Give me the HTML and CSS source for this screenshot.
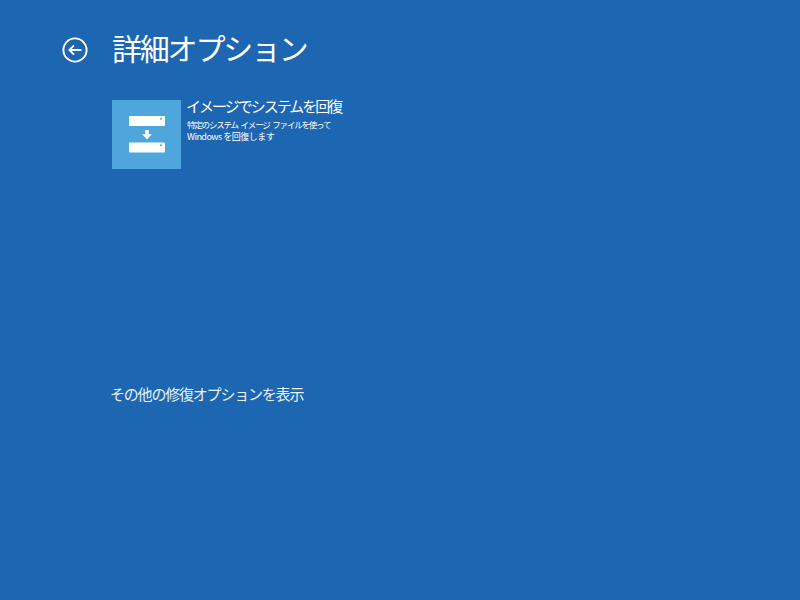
FILE: index.html
```html
<!DOCTYPE html>
<html lang="ja">
<head>
<meta charset="utf-8">
<title>詳細オプション</title>
<link rel="stylesheet" href="styles.css">
</head>
<body>
<main class="page">
  <header class="header">
    <svg class="back" viewBox="0 0 26 26" width="26" height="26" aria-hidden="true">
      <circle cx="13" cy="13" r="11.6" fill="none" stroke="#fff" stroke-width="1.9"/>
      <path d="M19.5 13H7.5M12 8.4 7.4 13l4.6 4.6" fill="none" stroke="#fff" stroke-width="1.9"/>
    </svg>
    <h1 class="title">詳細オプション</h1>
  </header>
  <section class="option">
    <div class="tile">
      <svg viewBox="0 0 38 38" width="38" height="38" aria-hidden="true">
        <rect x="1" y="0" width="36" height="10" rx="1" fill="#fff"/>
        <rect x="1" y="26.5" width="36" height="10" rx="1" fill="#fff"/>
        <circle cx="33" cy="2.8" r="1" fill="#4ea6dc"/>
        <circle cx="33" cy="29.3" r="1" fill="#4ea6dc"/>
        <path d="M17.2 14h3.6v4.3h3L19 23.5l-4.8-5.2h3z" fill="#fff"/>
      </svg>
    </div>
    <div class="option-text">
      <h2 class="option-title">イメージでシステムを回復</h2>
      <p class="option-desc"><span class="desc-first">特定のシステム イメージ ファイルを使って</span><br>Windows を回復します</p>
    </div>
  </section>
  <a class="more">その他の修復オプションを表示</a>
</main>
</body>
</html>
```
FILE: styles.css
```css
html, body {
  margin: 0;
  height: 100%;
}
body {
  background: #1d66b2;
  color: #fff;
  font-family: "Noto Sans CJK JP", "Noto Sans", sans-serif;
  overflow: hidden;
}
.page {
  display: flex;
  flex-direction: column;
  padding: 26px 0 0 62px;
}
.header {
  display: flex;
  align-items: flex-start;
  gap: 24px;
  height: 42px;
}
.back {
  flex: none;
  margin-top: 11px;
}
.title {
  margin: 0;
  font-size: 30px;
  font-weight: 400;
  line-height: 42px;
  letter-spacing: -2.2px;
}
.option {
  display: flex;
  gap: 5px;
  margin: 32px 0 0 50px;
}
.tile {
  width: 69px;
  height: 69px;
  background: #4ea6dc;
  display: flex;
  align-items: center;
  justify-content: center;
}
.option-title {
  margin: 0;
  font-size: 15px;
  font-weight: 400;
  line-height: 12px;
  letter-spacing: -2px;
}
.option-desc {
  margin: 6px 0 0 1px;
  font-size: 9px;
  line-height: 12px;
  letter-spacing: -0.5px;
}
.desc-first {
  font-size: 8.5px;
  letter-spacing: -1.2px;
  word-spacing: 2px;
}
.more {
  margin: 216px 0 0 48px;
  font-size: 15px;
  line-height: 18px;
  letter-spacing: -1.2px;
  color: #e8f0f8;
}
```
